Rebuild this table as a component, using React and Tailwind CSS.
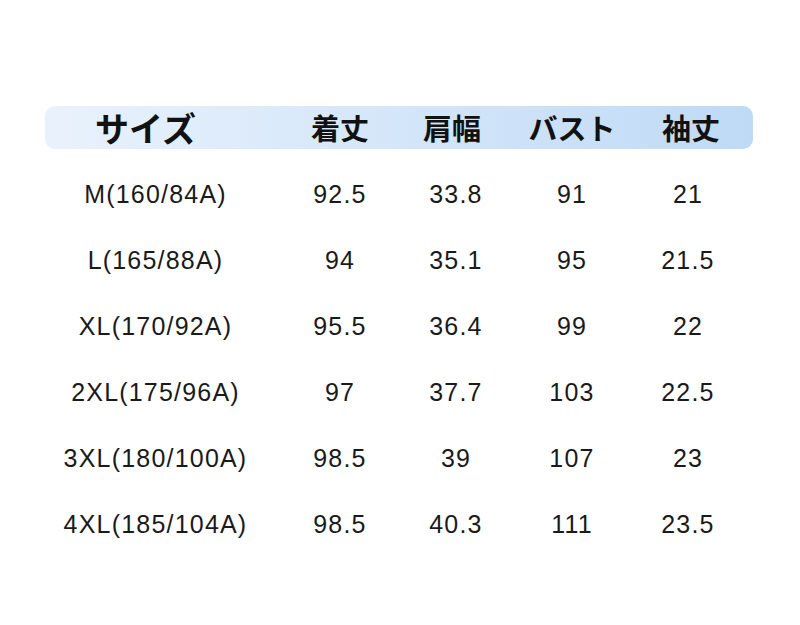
const rows = [
  ["M(160/84A)", "92.5", "33.8", "91", "21"],
  ["L(165/88A)", "94", "35.1", "95", "21.5"],
  ["XL(170/92A)", "95.5", "36.4", "99", "22"],
  ["2XL(175/96A)", "97", "37.7", "103", "22.5"],
  ["3XL(180/100A)", "98.5", "39", "107", "23"],
  ["4XL(185/104A)", "98.5", "40.3", "111", "23.5"],
];

const cols = "grid grid-cols-[237px_116px_116px_116px_116px]";
const jp = { fontFamily: '"Noto Sans CJK JP", sans-serif' };

const App = () => {
  return (
    <div className="w-[800px] h-[625px] bg-white pt-[106px] pl-[45px]">
      <div
        className={`${cols} w-[708px] h-[43px] items-center rounded-[10px] bg-gradient-to-r from-[#e9f2fc] to-[#bfdaf6] text-[#111]`}
        style={jp}
      >
        <div className="flex justify-center pr-[36px] text-[34px] font-bold leading-none">
          サイズ
        </div>
        <div className="flex justify-center text-[29px] font-bold leading-none">着丈</div>
        <div className="flex justify-center pr-[8px] text-[29px] font-bold leading-none">肩幅</div>
        <div className="flex justify-center text-[29px] font-bold leading-none">バスト</div>
        <div className="flex justify-center pl-[6px] text-[29px] font-bold leading-none">袖丈</div>
      </div>
      <div
        className="mt-[13px] text-[25px] tracking-[1.2px] text-[#1a1a1a]"
        style={{ fontFamily: '"Liberation Sans", Arial, sans-serif' }}
      >
        {rows.map((r) => (
          <div key={r[0]} className={`${cols} h-[66px] items-center`}>
            <div className="flex justify-center pr-[16px] whitespace-nowrap">{r[0]}</div>
            {r.slice(1).map((v, i) => (
              <div key={i} className="flex justify-center whitespace-nowrap">
                {v}
              </div>
            ))}
          </div>
        ))}
      </div>
    </div>
  );
};

export default App;
